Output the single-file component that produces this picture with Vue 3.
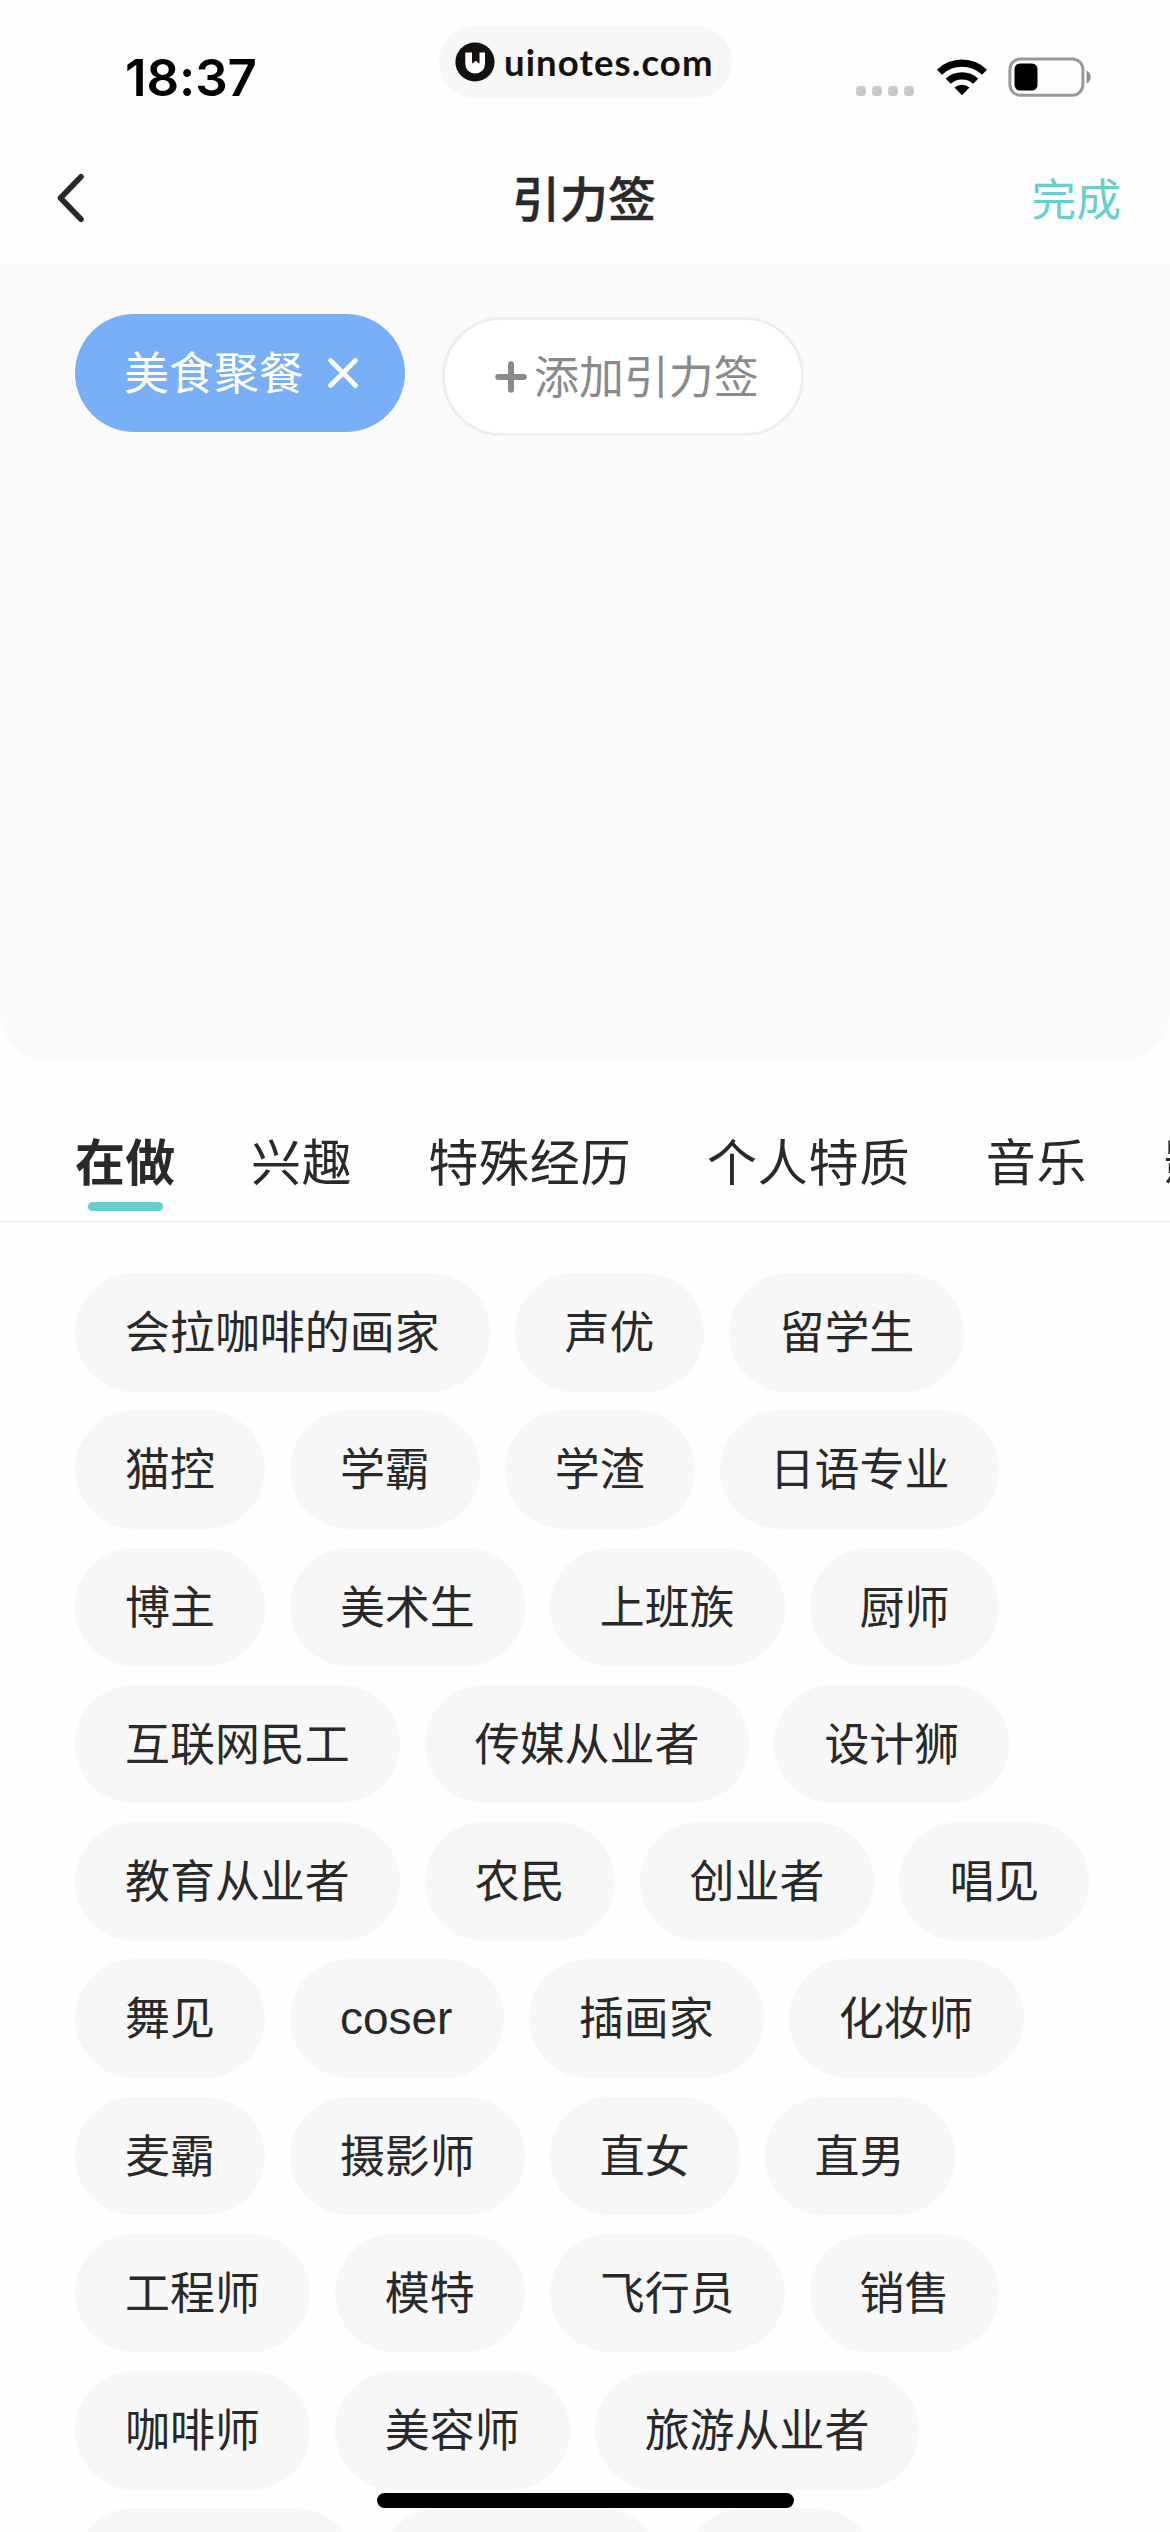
<script setup>
import { ref } from 'vue'

const tabs = ['在做', '兴趣', '特殊经历', '个人特质', '音乐', '影视']
const active = ref(0)

const rows = [
  ['会拉咖啡的画家', '声优', '留学生'],
  ['猫控', '学霸', '学渣', '日语专业'],
  ['博主', '美术生', '上班族', '厨师'],
  ['互联网民工', '传媒从业者', '设计狮'],
  ['教育从业者', '农民', '创业者', '唱见'],
  ['舞见', 'coser', '插画家', '化妆师'],
  ['麦霸', '摄影师', '直女', '直男'],
  ['工程师', '模特', '飞行员', '销售'],
  ['咖啡师', '美容师', '旅游从业者'],
]
</script>

<template>
  <div class="screen">
    <header class="top">
      <div class="status">
        <span class="time">18:37</span>
        <div class="site">
          <svg class="site-logo" width="40" height="40" viewBox="0 0 40 40">
            <circle cx="20" cy="20" r="19.6" fill="#15110f" />
            <path d="M10.3 10.4H17.3V21.6L20.8 18.6L24.2 21.6V10.4H30V22A9.85 9.6 0 0 1 10.3 22Z" fill="#fff" />
            <path d="M17 9H24.4V21.6L20.7 18.6L17 21.6Z" fill="#15110f" />
          </svg>
          <span class="site-name">uinotes.com</span>
        </div>
        <div class="signals">
          <span class="dots"><i v-for="n in 4" :key="n"></i></span>
          <svg class="wifi" width="52" height="40" viewBox="0 0 52 40">
            <path d="M1 12.7A35.5 35.5 0 0 1 51 12.7L46 17.7A29 29 0 0 0 6 17.7Z" />
            <path d="M9.8 21.8A23 23 0 0 1 42.2 21.8L37.2 26.8A16.6 16.6 0 0 0 14.8 26.8Z" />
            <path d="M18.5 30.6A11 11 0 0 1 33.5 30.6L26 38.2Z" />
          </svg>
          <svg class="battery" width="84" height="40" viewBox="0 0 84 40">
            <rect x="1.9" y="1.9" width="73" height="36.4" rx="10.5" fill="none" stroke="#999" stroke-width="3" />
            <rect x="6.5" y="6.5" width="23" height="27" rx="5.5" fill="#000" />
            <path d="M78.6 13.6C84 16 84 24 78.6 26.4Z" fill="#8c8c8c" />
          </svg>
        </div>
      </div>
      <nav class="nav">
        <svg width="34" height="56" viewBox="0 0 34 56">
          <path d="M27 6.8L6.5 28L27 49.2" fill="none" stroke="#292929" stroke-width="5.6" stroke-linecap="round" stroke-linejoin="round" />
        </svg>
        <h1>引力签</h1>
        <span class="done">完成</span>
      </nav>
    </header>

    <section class="picked">
      <span class="chosen">
        <b>美食聚餐</b>
        <svg width="32" height="32" viewBox="0 0 32 32">
          <path d="M3.5 3.5L28.5 28.5M28.5 3.5L3.5 28.5" stroke="#fff" stroke-width="4.8" stroke-linecap="round" />
        </svg>
      </span>
      <span class="add">
        <svg width="32" height="32" viewBox="0 0 32 32">
          <path d="M16 3.2V28.8M3.2 16H28.8" stroke="#8a8a8a" stroke-width="6" stroke-linecap="round" />
        </svg>
        <b>添加引力签</b>
      </span>
    </section>

    <div class="tabs">
      <span
        v-for="(tab, i) in tabs"
        :key="tab"
        class="tab"
        :class="{ active: i === active }"
        @click="active = i"
      >{{ tab }}</span>
    </div>

    <div class="tags">
      <div v-for="(row, i) in rows" :key="i" class="row">
        <span v-for="tag in row" :key="tag" class="tag" :class="{ latin: tag === 'coser' }">{{ tag }}</span>
      </div>
      <div class="row">
        <span class="tag wide"></span>
        <span class="tag wide"></span>
        <span class="tag short"></span>
      </div>
    </div>

    <div class="home"></div>
  </div>
</template>

<style>
body {
  background: #fefefe;
}
</style>

<style scoped>
.screen {
  position: relative;
  width: 1170px;
  height: 2532px;
  overflow: hidden;
  background: #fefefe;
  color: #292929;
  font-family: "Noto Sans CJK SC", sans-serif;
}
.top {
  height: 264px;
}
.status {
  display: flex;
  align-items: flex-start;
  height: 132px;
}
.time {
  flex: none;
  box-sizing: border-box;
  width: 439px;
  margin-top: 47px;
  padding-left: 125px;
  font: 600 51px/62px Inter, sans-serif;
  letter-spacing: -0.1px;
  color: #000;
}
.site {
  display: flex;
  align-items: center;
  flex: none;
  box-sizing: border-box;
  width: 293px;
  height: 72px;
  margin-top: 26px;
  padding-left: 16px;
  border-radius: 36px;
  background: #f7f7f7;
}
.site-logo {
  flex: none;
}
.site-name {
  margin-left: 9px;
  font: 700 36.5px/44px Lato, sans-serif;
  letter-spacing: 1.1px;
  color: #15110f;
}
.signals {
  display: flex;
  align-items: flex-end;
  height: 97px;
  margin-left: 124px;
}
.dots {
  display: flex;
  gap: 6px;
  margin-bottom: 1px;
}
.dots i {
  width: 10px;
  height: 10px;
  border-radius: 3.5px;
  background: #c9c9c9;
}
.wifi {
  margin-left: 22px;
}
.battery {
  margin-left: 20px;
}
.nav {
  display: grid;
  grid-template-columns: 1fr auto 1fr;
  align-items: center;
  height: 132px;
  padding: 0 49px 0 54px;
}
h1 {
  margin: -5px 7px 0 0;
  font-size: 48px;
  line-height: 72px;
  font-weight: 500;
  -webkit-text-stroke: 0.5px #292929;
}
.done {
  justify-self: end;
  margin-top: -3px;
  font-size: 44.85px;
  line-height: 66px;
  color: #69cfcb;
}
.picked {
  display: flex;
  align-items: flex-start;
  gap: 37px;
  box-sizing: border-box;
  height: 797px;
  padding: 50px 75px;
  border-radius: 0 0 50px 50px;
  background: #fafafa;
}
.chosen,
.add {
  display: flex;
  align-items: center;
  box-sizing: border-box;
  height: 118px;
  border-radius: 59px;
  font-size: 44.95px;
  line-height: 66px;
  white-space: nowrap;
}
.chosen b,
.add b {
  margin-top: -4px;
  font-weight: 400;
}
.chosen {
  gap: 23px;
  width: 330px;
  padding-left: 49px;
  background: #78aff6;
  color: #fff;
}
.add {
  gap: 7px;
  width: 362px;
  height: 119px;
  margin-top: 3px;
  padding-left: 50px;
  border: 3px solid #eee;
  border-radius: 60px;
  background: #fff;
  color: #8a8a8a;
}
.tabs {
  display: flex;
  gap: 75.6px;
  box-sizing: border-box;
  height: 161px;
  padding: 61px 0 0 75px;
  border-bottom: 1px solid #ebebeb;
  overflow: hidden;
}
.tab {
  flex: none;
  display: flex;
  flex-direction: column;
  align-items: center;
  font-size: 50px;
  line-height: 74px;
  letter-spacing: 0.8px;
}
.tab.active {
  font-weight: 700;
  letter-spacing: 0.2px;
}
.tab.active::after {
  content: "";
  width: 75px;
  height: 9px;
  margin-top: 6px;
  border-radius: 4.5px;
  background: #66cfcc;
}
.tags {
  display: flex;
  flex-direction: column;
  gap: 18.72px;
  padding: 51px 0 0 75px;
}
.row {
  display: flex;
  gap: 25px;
}
.tag {
  flex: none;
  box-sizing: border-box;
  height: 118.56px;
  padding: 0 50px;
  border-radius: 60px;
  background: #f7f7f7;
  font-size: 44.95px;
  line-height: 114px;
}
.tag.latin {
  width: 214px;
  font-family: "Liberation Sans", Arial, sans-serif;
  font-size: 46px;
  line-height: 118px;
}
.tag.wide {
  width: 280px;
}
.tag.short {
  width: 190px;
}
.home {
  position: absolute;
  left: 377px;
  bottom: 24px;
  width: 417px;
  height: 15px;
  border-radius: 8px;
  background: #000;
}
</style>
